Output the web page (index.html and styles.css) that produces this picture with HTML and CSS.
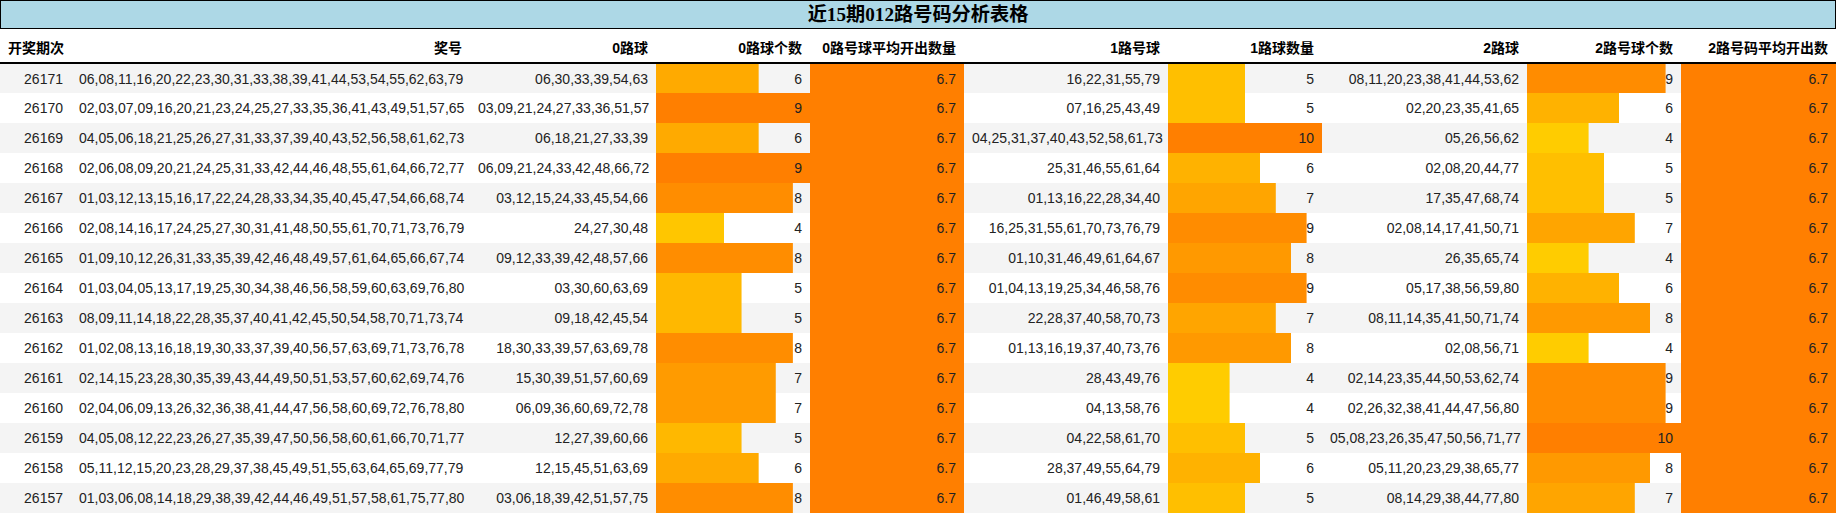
FILE: index.html
```html
<!DOCTYPE html>
<html lang="zh-CN">
<head>
<meta charset="utf-8">
<title>近15期012路号码分析表格</title>
<link rel="stylesheet" href="styles.css">
</head>
<body>
<div class="title">近15期012路号码分析表格</div>
<table class="grid">
<colgroup>
<col class="w-id"><col class="w-nums"><col class="w-r0"><col class="w-cnt"><col class="w-cnt"><col class="w-r1"><col class="w-cnt"><col class="w-r2"><col class="w-cnt"><col class="w-last">
</colgroup>
<thead>
<tr><th>开奖期次</th><th>奖号</th><th>0路球</th><th>0路球个数</th><th>0路号球平均开出数量</th><th>1路号球</th><th>1路球数量</th><th>2路球</th><th>2路号球个数</th><th>2路号码平均开出数</th></tr>
</thead>
<tbody>
<tr><td>26171</td><td>06,08,11,16,20,22,23,30,31,33,38,39,41,44,53,54,55,62,63,79</td><td>06,30,33,39,54,63</td><td class="bar" style="--w:66.667%;--c:#ffaa00">6</td><td class="avg">6.7</td><td>16,22,31,55,79</td><td class="bar" style="--w:50%;--c:#ffbf00">5</td><td>08,11,20,23,38,41,44,53,62</td><td class="bar" style="--w:90%;--c:#ff8c00">9</td><td class="avg">6.7</td></tr>
<tr><td>26170</td><td>02,03,07,09,16,20,21,23,24,25,27,33,35,36,41,43,49,51,57,65</td><td>03,09,21,24,27,33,36,51,57</td><td class="bar" style="--w:100%;--c:#ff7f00">9</td><td class="avg">6.7</td><td>07,16,25,43,49</td><td class="bar" style="--w:50%;--c:#ffbf00">5</td><td>02,20,23,35,41,65</td><td class="bar" style="--w:60%;--c:#ffb200">6</td><td class="avg">6.7</td></tr>
<tr><td>26169</td><td>04,05,06,18,21,25,26,27,31,33,37,39,40,43,52,56,58,61,62,73</td><td>06,18,21,27,33,39</td><td class="bar" style="--w:66.667%;--c:#ffaa00">6</td><td class="avg">6.7</td><td>04,25,31,37,40,43,52,58,61,73</td><td class="bar" style="--w:100%;--c:#ff7f00">10</td><td>05,26,56,62</td><td class="bar" style="--w:40%;--c:#ffcc00">4</td><td class="avg">6.7</td></tr>
<tr><td>26168</td><td>02,06,08,09,20,21,24,25,31,33,42,44,46,48,55,61,64,66,72,77</td><td>06,09,21,24,33,42,48,66,72</td><td class="bar" style="--w:100%;--c:#ff7f00">9</td><td class="avg">6.7</td><td>25,31,46,55,61,64</td><td class="bar" style="--w:60%;--c:#ffb200">6</td><td>02,08,20,44,77</td><td class="bar" style="--w:50%;--c:#ffbf00">5</td><td class="avg">6.7</td></tr>
<tr><td>26167</td><td>01,03,12,13,15,16,17,22,24,28,33,34,35,40,45,47,54,66,68,74</td><td>03,12,15,24,33,45,54,66</td><td class="bar" style="--w:88.889%;--c:#ff8d00">8</td><td class="avg">6.7</td><td>01,13,16,22,28,34,40</td><td class="bar" style="--w:70%;--c:#ffa500">7</td><td>17,35,47,68,74</td><td class="bar" style="--w:50%;--c:#ffbf00">5</td><td class="avg">6.7</td></tr>
<tr><td>26166</td><td>02,08,14,16,17,24,25,27,30,31,41,48,50,55,61,70,71,73,76,79</td><td>24,27,30,48</td><td class="bar" style="--w:44.444%;--c:#ffc600">4</td><td class="avg">6.7</td><td>16,25,31,55,61,70,73,76,79</td><td class="bar" style="--w:90%;--c:#ff8c00">9</td><td>02,08,14,17,41,50,71</td><td class="bar" style="--w:70%;--c:#ffa500">7</td><td class="avg">6.7</td></tr>
<tr><td>26165</td><td>01,09,10,12,26,31,33,35,39,42,46,48,49,57,61,64,65,66,67,74</td><td>09,12,33,39,42,48,57,66</td><td class="bar" style="--w:88.889%;--c:#ff8d00">8</td><td class="avg">6.7</td><td>01,10,31,46,49,61,64,67</td><td class="bar" style="--w:80%;--c:#ff9900">8</td><td>26,35,65,74</td><td class="bar" style="--w:40%;--c:#ffcc00">4</td><td class="avg">6.7</td></tr>
<tr><td>26164</td><td>01,03,04,05,13,17,19,25,30,34,38,46,56,58,59,60,63,69,76,80</td><td>03,30,60,63,69</td><td class="bar" style="--w:55.556%;--c:#ffb800">5</td><td class="avg">6.7</td><td>01,04,13,19,25,34,46,58,76</td><td class="bar" style="--w:90%;--c:#ff8c00">9</td><td>05,17,38,56,59,80</td><td class="bar" style="--w:60%;--c:#ffb200">6</td><td class="avg">6.7</td></tr>
<tr><td>26163</td><td>08,09,11,14,18,22,28,35,37,40,41,42,45,50,54,58,70,71,73,74</td><td>09,18,42,45,54</td><td class="bar" style="--w:55.556%;--c:#ffb800">5</td><td class="avg">6.7</td><td>22,28,37,40,58,70,73</td><td class="bar" style="--w:70%;--c:#ffa500">7</td><td>08,11,14,35,41,50,71,74</td><td class="bar" style="--w:80%;--c:#ff9900">8</td><td class="avg">6.7</td></tr>
<tr><td>26162</td><td>01,02,08,13,16,18,19,30,33,37,39,40,56,57,63,69,71,73,76,78</td><td>18,30,33,39,57,63,69,78</td><td class="bar" style="--w:88.889%;--c:#ff8d00">8</td><td class="avg">6.7</td><td>01,13,16,19,37,40,73,76</td><td class="bar" style="--w:80%;--c:#ff9900">8</td><td>02,08,56,71</td><td class="bar" style="--w:40%;--c:#ffcc00">4</td><td class="avg">6.7</td></tr>
<tr><td>26161</td><td>02,14,15,23,28,30,35,39,43,44,49,50,51,53,57,60,62,69,74,76</td><td>15,30,39,51,57,60,69</td><td class="bar" style="--w:77.778%;--c:#ff9b00">7</td><td class="avg">6.7</td><td>28,43,49,76</td><td class="bar" style="--w:40%;--c:#ffcc00">4</td><td>02,14,23,35,44,50,53,62,74</td><td class="bar" style="--w:90%;--c:#ff8c00">9</td><td class="avg">6.7</td></tr>
<tr><td>26160</td><td>02,04,06,09,13,26,32,36,38,41,44,47,56,58,60,69,72,76,78,80</td><td>06,09,36,60,69,72,78</td><td class="bar" style="--w:77.778%;--c:#ff9b00">7</td><td class="avg">6.7</td><td>04,13,58,76</td><td class="bar" style="--w:40%;--c:#ffcc00">4</td><td>02,26,32,38,41,44,47,56,80</td><td class="bar" style="--w:90%;--c:#ff8c00">9</td><td class="avg">6.7</td></tr>
<tr><td>26159</td><td>04,05,08,12,22,23,26,27,35,39,47,50,56,58,60,61,66,70,71,77</td><td>12,27,39,60,66</td><td class="bar" style="--w:55.556%;--c:#ffb800">5</td><td class="avg">6.7</td><td>04,22,58,61,70</td><td class="bar" style="--w:50%;--c:#ffbf00">5</td><td>05,08,23,26,35,47,50,56,71,77</td><td class="bar" style="--w:100%;--c:#ff7f00">10</td><td class="avg">6.7</td></tr>
<tr><td>26158</td><td>05,11,12,15,20,23,28,29,37,38,45,49,51,55,63,64,65,69,77,79</td><td>12,15,45,51,63,69</td><td class="bar" style="--w:66.667%;--c:#ffaa00">6</td><td class="avg">6.7</td><td>28,37,49,55,64,79</td><td class="bar" style="--w:60%;--c:#ffb200">6</td><td>05,11,20,23,29,38,65,77</td><td class="bar" style="--w:80%;--c:#ff9900">8</td><td class="avg">6.7</td></tr>
<tr><td>26157</td><td>01,03,06,08,14,18,29,38,39,42,44,46,49,51,57,58,61,75,77,80</td><td>03,06,18,39,42,51,57,75</td><td class="bar" style="--w:88.889%;--c:#ff8d00">8</td><td class="avg">6.7</td><td>01,46,49,58,61</td><td class="bar" style="--w:50%;--c:#ffbf00">5</td><td>08,14,29,38,44,77,80</td><td class="bar" style="--w:70%;--c:#ffa500">7</td><td class="avg">6.7</td></tr>
</tbody>
</table>
</body>
</html>
```
FILE: styles.css
```css
html, body {
  margin: 0;
  padding: 0;
  background: #ffffff;
}

body {
  font-family: "Liberation Sans", "Noto Sans CJK SC", sans-serif;
  font-size: 14px;
  color: #222222;
}

.title {
  border: 1px solid #000000;
  background: #add8e6;
  text-align: center;
  font-family: "Liberation Serif", "Noto Sans CJK SC", serif;
  font-weight: bold;
  font-size: 19.2px;
  line-height: 27px;
  color: #000000;
}

.grid {
  width: 100%;
  table-layout: fixed;
  border-collapse: collapse;
  border-spacing: 0;
}

.w-id { width: 71px; }
.w-nums { width: 399px; }
.w-r0 { width: 186px; }
.w-cnt { width: 154px; }
.w-r1 { width: 204px; }
.w-r2 { width: 205px; }
.w-last { width: 155px; }

.grid th {
  height: 34px;
  padding: 3px 8px 0;
  box-sizing: border-box;
  text-align: right;
  font-weight: bold;
  color: #000000;
  white-space: nowrap;
  border-bottom: 2px solid #000000;
}

.grid td {
  height: 30px;
  padding: 0 8px;
  box-sizing: border-box;
  text-align: right;
  white-space: nowrap;
  line-height: 16px;
}

.grid tbody tr:nth-child(odd) {
  background: #f4f4f4;
}

.grid tbody tr:nth-child(even) {
  background: #ffffff;
}

.grid td.bar {
  background-image: linear-gradient(var(--c), var(--c));
  background-size: var(--w) 100%;
  background-repeat: no-repeat;
  background-position: 0 0;
}

.grid td.avg {
  background: #ff7f00;
}
```
